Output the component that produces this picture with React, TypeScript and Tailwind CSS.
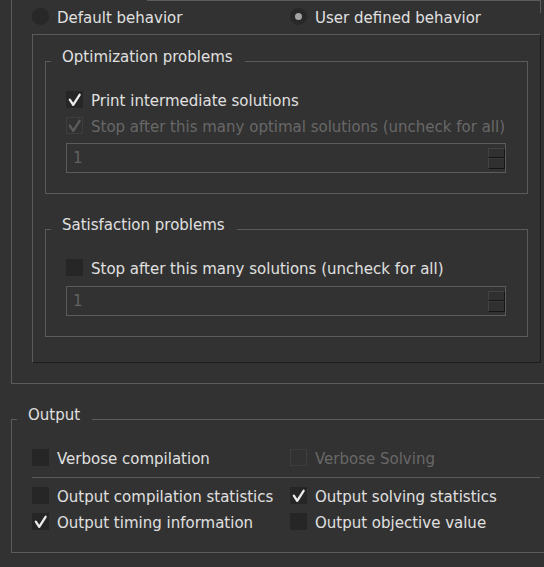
import React from "react";

const LINE = "bg-[#5b5b5b]";

const Box = ({ checked = false, disabled = false }: { checked?: boolean; disabled?: boolean }) => (
  <span
    className={
      disabled
        ? "flex h-[17px] w-[17px] shrink-0 items-center justify-center border border-[#3e3e3e]"
        : "flex h-[17px] w-[17px] shrink-0 items-center justify-center border border-[#262626] bg-[#262626]"
    }
  >
    {checked && (
      <svg width="15" height="15" viewBox="1 1 15 15">
        <path
          d="M3.8 8.6 L7.2 13.8 L13.6 3.8"
          fill="none"
          stroke={disabled ? "#5c5c5c" : "#ececec"}
          strokeWidth="2.3"
          strokeLinecap="round"
          strokeLinejoin="round"
        />
      </svg>
    )}
  </span>
);

const CheckRow = ({
  label,
  checked,
  disabled,
  className = "",
}: {
  label: string;
  checked?: boolean;
  disabled?: boolean;
  className?: string;
}) => (
  <div className={`flex h-[17px] items-center gap-[8px] ${className}`}>
    <Box checked={checked} disabled={disabled} />
    <span className={`mt-[4px] whitespace-nowrap leading-[17px] ${disabled ? "text-[#686868]" : "text-[#e0e0e0]"}`}>
      {label}
    </span>
  </div>
);

const Radio = ({ label, on, className = "" }: { label: string; on?: boolean; className?: string }) => (
  <div className={`flex h-[17px] items-center gap-[8px] ${className}`}>
    <span className="flex h-[17px] w-[17px] shrink-0 items-center justify-center rounded-full bg-[#282828]">
      {on && <span className="h-[7px] w-[7px] rounded-full bg-[#a3a3a3]" />}
    </span>
    <span className="mt-[4px] whitespace-nowrap leading-[17px] text-[#e0e0e0]">{label}</span>
  </div>
);

const GroupHeader = ({ title }: { title: string }) => (
  <div className="flex h-[14px] items-end">
    <div className={`h-px w-[6px] ${LINE}`} />
    <span className="self-start whitespace-nowrap pl-[11px] pr-[12px] leading-[18px] text-[#e0e0e0]">{title}</span>
    <div className={`h-px flex-1 ${LINE}`} />
  </div>
);

const Spin = () => (
  <div className="flex h-[30px] w-[440px] items-center justify-between border border-[#5b5b5b] pl-[6px]">
    <span className="leading-[17px] text-[#626262]">1</span>
    <div className="flex flex-col">
      <div className="h-[10px] w-[17px] border-b border-l border-r border-t border-b-[#151515] border-l-[#424242] border-r-[#151515] border-t-[#424242] bg-[#303030]" />
      <div className="h-[11px] w-[17px] border-b border-l border-r border-t border-b-[#151515] border-l-[#424242] border-r-[#151515] border-t-[#3a3a3a] bg-[#303030]" />
    </div>
  </div>
);

export default function App() {
  return (
    <div
      className="relative h-[567px] w-[544px] overflow-hidden bg-[#323232] text-[15px]"
      style={{ fontFamily: '"DejaVu Sans", "Liberation Sans", sans-serif' }}
    >
      {/* edge of the widget above, clipped by the window */}
      <div className="absolute left-[147px] top-0 h-[13px] w-[394px] border-r border-t border-[#5b5b5b]" />

      {/* solver behaviour group */}
      <div className="ml-[11px] flex h-[384px] w-[533px] flex-col border-b border-l border-[#5b5b5b]">
        <div className="flex pl-[20px] pt-[8px]">
          <Radio label="Default behavior" className="w-[258px]" />
          <Radio label="User defined behavior" on />
        </div>

        <div className="ml-[20px] mt-[9px] flex h-[329px] w-[509px] flex-col border border-b-[#1c1c1c] border-l-[#5b5b5b] border-r-[#1c1c1c] border-t-[#5b5b5b] pl-[12px] pt-[13px]">
          <div className="w-[483px]">
            <GroupHeader title="Optimization problems" />
            <div className="flex flex-col border-x border-b border-[#5b5b5b] pb-[20px] pl-[20px] pt-[29px]">
              <CheckRow label="Print intermediate solutions" checked />
              <CheckRow
                label="Stop after this many optimal solutions (uncheck for all)"
                checked
                disabled
                className="mt-[9px]"
              />
              <div className="mt-[9px]">
                <Spin />
              </div>
            </div>
          </div>

          <div className="mt-[22px] w-[483px]">
            <GroupHeader title="Satisfaction problems" />
            <div className="flex flex-col border-x border-b border-[#5b5b5b] pb-[20px] pl-[20px] pt-[29px]">
              <CheckRow label="Stop after this many solutions (uncheck for all)" />
              <div className="mt-[10px]">
                <Spin />
              </div>
            </div>
          </div>
        </div>
      </div>

      {/* output group */}
      <div className="ml-[11px] mt-[22px] w-[533px]">
        <GroupHeader title="Output" />
        <div className="flex flex-col border-b border-l border-[#5b5b5b] pb-[22px] pl-[20px] pt-[29px]">
          <div className="flex">
            <CheckRow label="Verbose compilation" className="w-[258px]" />
            <CheckRow label="Verbose Solving" disabled />
          </div>
          <div className={`mt-[11px] h-px w-[508px] ${LINE}`} />
          <div className="mt-[9px] flex">
            <CheckRow label="Output compilation statistics" className="w-[258px]" />
            <CheckRow label="Output solving statistics" checked />
          </div>
          <div className="mt-[9px] flex">
            <CheckRow label="Output timing information" className="w-[258px]" checked />
            <CheckRow label="Output objective value" />
          </div>
        </div>
      </div>
    </div>
  );
}
